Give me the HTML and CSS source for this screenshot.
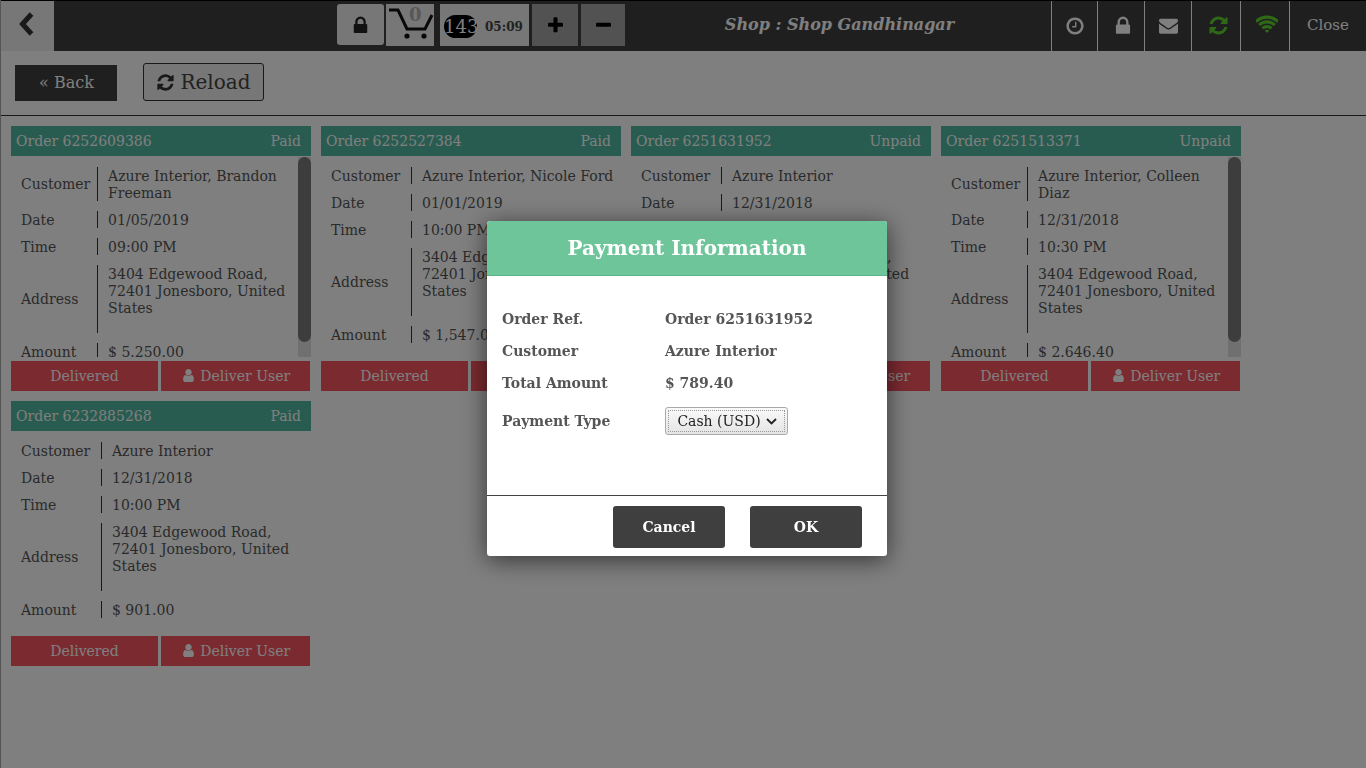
FILE: index.html
```html
<!DOCTYPE html>
<html>
<head>
  <title>Shop Gandhinagar - Orders</title>
  <link rel="stylesheet" href="styles.css">
</head>
<body>
  <div class="top-bar">
    <div class="back-arrow">
      <svg width="17" height="26" viewBox="0 0 17 26"><polyline points="13.5,3 4.5,13 13.5,23" fill="none" stroke="#333" stroke-width="5"/></svg>
    </div>
    <div class="pos-group">
      <div class="pos-btn lock-btn">
        <svg width="21" height="21" viewBox="0 0 1792 1792"><path fill="#222" d="M640 768h512v-192q0-106-75-181t-181-75-181 75-75 181v192zm832 96v576q0 40-28 68t-68 28h-960q-40 0-68-28t-28-68v-576q0-40 28-68t68-28h32v-192q0-184 132-316t316-132 316 132 132 316v192h32q40 0 68 28t28 68z"/></svg>
      </div>
      <div class="pos-btn cart-btn">
        <svg width="48" height="42" viewBox="0 0 48 42">
          <polyline points="3,6 12,6 21,25 39,25 46,11" fill="none" stroke="#111" stroke-width="3"/>
          <circle cx="21" cy="32" r="2.6" fill="#111"/>
          <circle cx="38" cy="32" r="2.6" fill="#111"/>
        </svg>
        <span class="cart-count">0</span>
      </div>
      <div class="pos-btn timer-btn">
        <span class="timer-badge">143</span>
        <span class="timer-text">05:09</span>
      </div>
      <div class="pos-btn step-btn plus-btn">
        <svg width="19" height="19" viewBox="0 0 1792 1792"><path fill="#000" d="M1600 736v192q0 40-28 68t-68 28h-416v416q0 40-28 68t-68 28h-192q-40 0-68-28t-28-68v-416h-416q-40 0-68-28t-28-68v-192q0-40 28-68t68-28h416v-416q0-40 28-68t68-28h192q40 0 68 28t28 68v416h416q40 0 68 28t28 68z"/></svg>
      </div>
      <div class="pos-btn step-btn minus-btn">
        <svg width="19" height="19" viewBox="0 0 1792 1792"><path fill="#000" d="M1600 736v192q0 40-28 68t-68 28h-1216q-40 0-68-28t-28-68v-192q0-40 28-68t68-28h1216q40 0 68 28t28 68z"/></svg>
      </div>
    </div>
    <div class="shop-title">Shop : Shop Gandhinagar</div>
    <div class="status-group">
      <div class="status-item w46">
        <svg width="20" height="20" viewBox="0 0 1792 1792"><path fill="#fff" d="M1024 544v448q0 14-9 23t-23 9h-320q-14 0-23-9t-9-23v-64q0-14 9-23t23-9h224v-352q0-14 9-23t23-9h64q14 0 23 9t9 23zm416 352q0-148-73-273t-198-198-273-73-273 73-198 198-73 273 73 273 198 198 273 73 273-73 198-198 73-273zm224 0q0 209-103 385.5t-279.5 279.5-385.5 103-385.5-103-279.5-279.5-103-385.5 103-385.5 279.5-279.5 385.5-103 385.5 103 279.5 279.5 103 385.5z"/></svg>
      </div>
      <div class="status-item w47 shift-right">
        <svg width="22" height="22" viewBox="0 0 1792 1792"><path fill="#fff" d="M640 768h512v-192q0-106-75-181t-181-75-181 75-75 181v192zm832 96v576q0 40-28 68t-68 28h-960q-40 0-68-28t-28-68v-576q0-40 28-68t68-28h32v-192q0-184 132-316t316-132 316 132 132 316v192h32q40 0 68 28t28 68z"/></svg>
      </div>
      <div class="status-item w47">
        <svg width="19" height="19" viewBox="0 0 1792 1792"><path fill="#fff" d="M1792 710v794q0 66-47 113t-113 47h-1472q-66 0-113-47t-47-113v-794q44 49 101 87 362 246 497 345 57 42 92.5 65.5t94.5 48 110 24.5h2q51 0 110-24.5t94.5-48 92.5-65.5q170-123 498-345 57-39 100-87zm0-294q0 79-49 151t-122 123q-376 261-468 325-10 7-42.5 30.5t-54 38-52 32.5-57.5 27-50 9h-2q-23 0-50-9t-57.5-27-52-32.5-54-38-42.5-30.5q-91-64-262-182.5t-205-142.5q-62-42-117-115.5t-55-136.5q0-78 41.5-130t118.5-52h1472q65 0 112.5 47t47.5 113z"/></svg>
      </div>
      <div class="status-item w49 shift-right">
        <svg width="21" height="21" viewBox="0 0 1792 1792"><path fill="#5ed32e" d="M1639 1056q0 5-1 7-64 268-268 434.5t-478 166.5q-146 0-282.5-55t-243.5-157l-129 129q-19 19-45 19t-45-19-19-45v-448q0-26 19-45t45-19h448q26 0 45 19t19 45-19 45l-137 137q71 66 161 102t187 36q134 0 250-65t186-179q11-17 53-117 8-23 30-23h192q13 0 22.5 9.5t9.5 22.5zm25-800v448q0 26-19 45t-45 19h-448q-26 0-45-19t-19-45 19-45l138-138q-148-137-349-137-134 0-250 65t-186 179q-11 17-53 117-8 23-30 23h-199q-13 0-22.5-9.5t-9.5-22.5v-7q65-268 270-434.5t480-166.5q146 0 284 55.5t245 156.5l130-129q19-19 45-19t45 19 19 45z"/></svg>
      </div>
      <div class="status-item w49 shift-right wifi-item">
        <svg width="22" height="22" viewBox="0 0 1792 1792"><path fill="#5ed32e" d="M896 1523q-20 0-93-73.5t-73-93.5q0-32 62.5-54t103.5-22 103.5 22 62.5 54q0 20-73 93.5t-93 73.5zm270-271q-2 0-40-25t-101.5-50-128.5-25-128.5 25-101 50-40.5 25q-18 0-93.5-75t-75.5-93q0-13 10-23 78-77 196-121t233-44 233 44 196 121q10 10 10 23 0 18-75.5 93t-93.5 75zm273-272q-11 0-23-8-136-105-252-154.5t-268-49.5q-85 0-170.5 22t-149 53-113.5 62-79 53-31 22q-17 0-92-75t-75-93q0-12 10-22 132-132 320-205t380-73 380 73 320 205q10 10 10 22 0 18-75 93t-92 75zm271-271q-11 0-22-9-179-157-371.5-236.5t-420.5-79.5-420.5 79.5-371.5 236.5q-11 9-22 9-17 0-92.5-75t-75.5-93q0-13 10-23 187-186 445-288t527-102 527 102 445 288q10 10 10 23 0 18-75.5 93t-92.5 75z"/></svg>
      </div>
      <div class="status-item close-item">Close</div>
    </div>
  </div>

  <div class="tool-bar">
    <div class="back-btn">&laquo; Back</div>
    <div class="reload-btn">
      <svg width="19" height="19" viewBox="0 0 1792 1792"><path fill="#333" d="M1639 1056q0 5-1 7-64 268-268 434.5t-478 166.5q-146 0-282.5-55t-243.5-157l-129 129q-19 19-45 19t-45-19-19-45v-448q0-26 19-45t45-19h448q26 0 45 19t19 45-19 45l-137 137q71 66 161 102t187 36q134 0 250-65t186-179q11-17 53-117 8-23 30-23h192q13 0 22.5 9.5t9.5 22.5zm25-800v448q0 26-19 45t-45 19h-448q-26 0-45-19t-19-45 19-45l138-138q-148-137-349-137-134 0-250 65t-186 179q-11 17-53 117-8 23-30 23h-199q-13 0-22.5-9.5t-9.5-22.5v-7q65-268 270-434.5t480-166.5q146 0 284 55.5t245 156.5l130-129q19-19 45-19t45 19 19 45z"/></svg>
      Reload
    </div>
  </div>

  <div class="order-list">
    <div class="order-card">
      <div class="order-head"><span>Order 6252609386</span><span>Paid</span></div>
      <div class="order-body">
        <div class="order-scroll">
          <table class="order-table">
            <tr><td class="lbl lbl-tall">Customer</td><td class="val">Azure Interior, Brandon Freeman</td></tr>
            <tr><td class="lbl">Date</td><td class="val">01/05/2019</td></tr>
            <tr><td class="lbl">Time</td><td class="val">09:00 PM</td></tr>
            <tr><td class="lbl lbl-tall">Address</td><td class="val">3404 Edgewood Road, 72401 Jonesboro, United States<br><br></td></tr>
            <tr><td class="lbl">Amount</td><td class="val">$ 5.250.00</td></tr>
          </table>
        </div>
        <div class="scroll-track"><div class="scroll-thumb"></div></div>
      </div>
      <div class="order-actions">
        <div class="act-btn act-left">Delivered</div>
        <div class="act-btn act-right"><svg width="15" height="15" viewBox="0 0 1792 1792"><path fill="#fff" d="M1536 1399q0 109-62.5 187t-150.5 78h-854q-88 0-150.5-78t-62.5-187q0-85 8.5-160.5t31.5-152 58.5-131 94-89 134.5-34.5q131 128 313 128t313-128q76 0 134.5 34.5t94 89 58.5 131 31.5 152 8.5 160.5zm-256-887q0 159-112.5 271.5t-271.5 112.5-271.5-112.5-112.5-271.5 112.5-271.5 271.5-112.5 271.5 112.5 112.5 271.5z"/></svg> Deliver User</div>
      </div>
    </div>

    <div class="order-card">
      <div class="order-head"><span>Order 6252527384</span><span>Paid</span></div>
      <div class="order-body">
        <div class="order-scroll">
          <table class="order-table">
            <tr><td class="lbl">Customer</td><td class="val">Azure Interior, Nicole Ford</td></tr>
            <tr><td class="lbl">Date</td><td class="val">01/01/2019</td></tr>
            <tr><td class="lbl">Time</td><td class="val">10:00 PM</td></tr>
            <tr><td class="lbl lbl-tall">Address</td><td class="val">3404 Edgewood Road, 72401 Jonesboro, United States<br><br></td></tr>
            <tr><td class="lbl">Amount</td><td class="val">$ 1,547.00</td></tr>
          </table>
        </div>
      </div>
      <div class="order-actions">
        <div class="act-btn act-left">Delivered</div>
        <div class="act-btn act-right"><svg width="15" height="15" viewBox="0 0 1792 1792"><path fill="#fff" d="M1536 1399q0 109-62.5 187t-150.5 78h-854q-88 0-150.5-78t-62.5-187q0-85 8.5-160.5t31.5-152 58.5-131 94-89 134.5-34.5q131 128 313 128t313-128q76 0 134.5 34.5t94 89 58.5 131 31.5 152 8.5 160.5zm-256-887q0 159-112.5 271.5t-271.5 112.5-271.5-112.5-112.5-271.5 112.5-271.5 271.5-112.5 271.5 112.5 112.5 271.5z"/></svg> Deliver User</div>
      </div>
    </div>

    <div class="order-card">
      <div class="order-head"><span>Order 6251631952</span><span>Unpaid</span></div>
      <div class="order-body">
        <div class="order-scroll">
          <table class="order-table">
            <tr><td class="lbl">Customer</td><td class="val">Azure Interior</td></tr>
            <tr><td class="lbl">Date</td><td class="val">12/31/2018</td></tr>
            <tr><td class="lbl">Time</td><td class="val">10:00 PM</td></tr>
            <tr><td class="lbl lbl-tall">Address</td><td class="val">3404 Edgewood Road, 72401 Jonesboro, United States<br><br></td></tr>
            <tr><td class="lbl">Amount</td><td class="val">$ 789.40</td></tr>
          </table>
        </div>
      </div>
      <div class="order-actions">
        <div class="act-btn act-left">Delivered</div>
        <div class="act-btn act-right"><svg width="15" height="15" viewBox="0 0 1792 1792"><path fill="#fff" d="M1536 1399q0 109-62.5 187t-150.5 78h-854q-88 0-150.5-78t-62.5-187q0-85 8.5-160.5t31.5-152 58.5-131 94-89 134.5-34.5q131 128 313 128t313-128q76 0 134.5 34.5t94 89 58.5 131 31.5 152 8.5 160.5zm-256-887q0 159-112.5 271.5t-271.5 112.5-271.5-112.5-112.5-271.5 112.5-271.5 271.5-112.5 271.5 112.5 112.5 271.5z"/></svg> Deliver User</div>
      </div>
    </div>

    <div class="order-card">
      <div class="order-head"><span>Order 6251513371</span><span>Unpaid</span></div>
      <div class="order-body">
        <div class="order-scroll">
          <table class="order-table">
            <tr><td class="lbl lbl-tall">Customer</td><td class="val">Azure Interior, Colleen Diaz</td></tr>
            <tr><td class="lbl">Date</td><td class="val">12/31/2018</td></tr>
            <tr><td class="lbl">Time</td><td class="val">10:30 PM</td></tr>
            <tr><td class="lbl lbl-tall">Address</td><td class="val">3404 Edgewood Road, 72401 Jonesboro, United States<br><br></td></tr>
            <tr><td class="lbl">Amount</td><td class="val">$ 2.646.40</td></tr>
          </table>
        </div>
        <div class="scroll-track"><div class="scroll-thumb"></div></div>
      </div>
      <div class="order-actions">
        <div class="act-btn act-left">Delivered</div>
        <div class="act-btn act-right"><svg width="15" height="15" viewBox="0 0 1792 1792"><path fill="#fff" d="M1536 1399q0 109-62.5 187t-150.5 78h-854q-88 0-150.5-78t-62.5-187q0-85 8.5-160.5t31.5-152 58.5-131 94-89 134.5-34.5q131 128 313 128t313-128q76 0 134.5 34.5t94 89 58.5 131 31.5 152 8.5 160.5zm-256-887q0 159-112.5 271.5t-271.5 112.5-271.5-112.5-112.5-271.5 112.5-271.5 271.5-112.5 271.5 112.5 112.5 271.5z"/></svg> Deliver User</div>
      </div>
    </div>

    <div class="order-card">
      <div class="order-head"><span>Order 6232885268</span><span>Paid</span></div>
      <div class="order-body">
        <div class="order-scroll">
          <table class="order-table">
            <tr><td class="lbl">Customer</td><td class="val">Azure Interior</td></tr>
            <tr><td class="lbl">Date</td><td class="val">12/31/2018</td></tr>
            <tr><td class="lbl">Time</td><td class="val">10:00 PM</td></tr>
            <tr><td class="lbl lbl-tall">Address</td><td class="val">3404 Edgewood Road, 72401 Jonesboro, United States<br><br></td></tr>
            <tr><td class="lbl">Amount</td><td class="val">$ 901.00</td></tr>
          </table>
        </div>
      </div>
      <div class="order-actions">
        <div class="act-btn act-left">Delivered</div>
        <div class="act-btn act-right"><svg width="15" height="15" viewBox="0 0 1792 1792"><path fill="#fff" d="M1536 1399q0 109-62.5 187t-150.5 78h-854q-88 0-150.5-78t-62.5-187q0-85 8.5-160.5t31.5-152 58.5-131 94-89 134.5-34.5q131 128 313 128t313-128q76 0 134.5 34.5t94 89 58.5 131 31.5 152 8.5 160.5zm-256-887q0 159-112.5 271.5t-271.5 112.5-271.5-112.5-112.5-271.5 112.5-271.5 271.5-112.5 271.5 112.5 112.5 271.5z"/></svg> Deliver User</div>
      </div>
    </div>
  </div>

  <div class="overlay"></div>

  <div class="pay-dialog">
    <div class="pay-head">Payment Information</div>
    <div class="pay-body">
      <div class="pay-grid">
        <div>Order Ref.</div><div>Order 6251631952</div>
        <div>Customer</div><div>Azure Interior</div>
        <div>Total Amount</div><div>$ 789.40</div>
        <div>Payment Type</div>
        <div class="pay-select">
          <span class="pay-select-inner">Cash (USD)
            <svg width="11" height="7" viewBox="0 0 11 7"><polyline points="1,1 5.5,5.5 10,1" fill="none" stroke="#222" stroke-width="1.8"/></svg>
          </span>
        </div>
      </div>
    </div>
    <div class="pay-foot">
      <div class="pay-btn">Cancel</div>
      <div class="pay-btn">OK</div>
    </div>
  </div>
</body>
</html>
```

FILE: styles.css
```css
html, body {
  margin: 0;
  padding: 0;
  height: 100%;
}

body {
  font-family: "DejaVu Serif", serif;
  font-size: 14px;
  color: #555;
  background-color: #fff;
  border-left: 1px solid #aaa;
  box-sizing: border-box;
  overflow: hidden;
}

/* top bar */
.top-bar {
  display: flex;
  height: 50px;
  margin-left: -1px;
  border-top: 1px solid #000;
  background-color: #3e3e3e;
}

.back-arrow {
  width: 53px;
  margin-left: 1px;
  background-color: #eee;
  display: flex;
  justify-content: center;
  align-items: flex-start;
  padding: 10px 0 0 0;
  box-sizing: border-box;
}

.back-arrow svg {
  margin-left: 1px;
  margin-right: 3px;
}

.pos-group {
  display: flex;
  margin-left: 283px;
  padding-top: 3px;
}

.pos-btn {
  height: 42px;
  box-sizing: border-box;
  display: flex;
  align-items: center;
  justify-content: center;
  background-color: #eee;
}

.lock-btn {
  width: 47px;
  height: 41px;
  padding: 2px 1px 0 0;
  border-radius: 3px;
  margin-right: 2px;
}

.cart-btn {
  width: 48px;
  height: 42px;
  margin-right: 6px;
  position: relative;
}

.cart-count {
  position: absolute;
  left: 23px;
  top: 0;
  font-size: 18px;
  font-weight: bold;
  color: #b0b0b0;
}

.timer-btn {
  width: 89px;
  margin-right: 3px;
  padding-top: 3px;
  justify-content: flex-start;
}

.timer-badge {
  width: 33px;
  height: 23px;
  margin-left: 4px;
  border-radius: 12px;
  background-color: #000;
  color: #fff;
  font-size: 18px;
  line-height: 23px;
  text-align: center;
}

.timer-text {
  margin-left: 8px;
  font-size: 12px;
  font-weight: bold;
  color: #444;
}

.step-btn {
  width: 46px;
  padding-top: 1px;
  background-color: #a5a5a5;
  margin-right: 3px;
}

.minus-btn {
  width: 44px;
  margin-right: 0;
}

.shop-title {
  flex: 1;
  padding-top: 14px;
  padding-left: 3px;
  text-align: center;
  font-size: 16px;
  font-weight: bold;
  font-style: italic;
  color: #fff;
}

.status-group {
  display: flex;
}

.status-item {
  display: flex;
  align-items: center;
  justify-content: center;
  border-left: 1px solid #fff;
  box-sizing: border-box;
  padding-bottom: 1px;
}

.w46 {
  width: 46px;
}

.w47 {
  width: 47px;
}

.w49 {
  width: 49px;
}

.shift-right {
  padding-left: 4px;
}

.wifi-item {
  padding-bottom: 3px;
}

.close-item {
  width: 77px;
  font-size: 15px;
  color: #fff;
  padding-bottom: 3px;
}

/* back and reload */
.tool-bar {
  height: 64px;
  display: flex;
  align-items: flex-start;
  border-bottom: 1px solid #333;
  padding-left: 14px;
}

.back-btn {
  width: 102px;
  height: 36px;
  margin-top: 14px;
  padding-left: 24px;
  box-sizing: border-box;
  background-color: #3e3e3e;
  color: #fff;
  font-size: 16px;
  line-height: 36px;
}

.reload-btn {
  width: 121px;
  height: 38px;
  margin-top: 12px;
  margin-left: 26px;
  box-sizing: border-box;
  border: 1px solid #333;
  border-radius: 3px;
  background-color: #eee;
  color: #444;
  font-size: 20px;
  display: flex;
  align-items: center;
  justify-content: center;
  gap: 5px;
}

/* orders */
.order-list {
  display: flex;
  flex-wrap: wrap;
  gap: 10px;
  padding: 10px 0 0 10px;
  width: 1240px;
}

.order-card {
  width: 300px;
}

.order-head {
  height: 30px;
  padding: 0 10px 0 5px;
  display: flex;
  justify-content: space-between;
  align-items: center;
  background-color: #52b8a0;
  color: #fff;
}

.order-body {
  height: 200px;
  margin-top: 1px;
  display: flex;
}

.order-scroll {
  flex: 1;
  min-width: 0;
  overflow: hidden;
}

.scroll-track {
  width: 13px;
  background-color: #e0e0e0;
}

.scroll-thumb {
  height: 185px;
  border-radius: 7px;
  background-color: #7a7a7a;
}

.order-table {
  width: 100%;
  margin-top: 1px;
  table-layout: fixed;
  border-collapse: separate;
  border-spacing: 0 9px;
  line-height: 17px;
}

.order-table td {
  padding: 1px 0 0 0;
}

.order-table .lbl {
  width: 30%;
  padding-left: 10px;
  box-sizing: border-box;
}

.order-table .lbl-tall {
  padding-top: 0;
  padding-bottom: 1px;
}

.order-table .val {
  padding-left: 11px;
  background: linear-gradient(#333, #333) left top / 1px calc(100% - 1px) no-repeat;
}

.order-actions {
  display: flex;
  gap: 3px;
  margin-top: 4px;
}

.act-btn {
  height: 30px;
  line-height: 30px;
  text-align: center;
  background-color: #f65660;
  color: #fff;
}

.act-left {
  width: 147px;
}

.act-right {
  width: 149px;
}

.act-right svg {
  vertical-align: -2px;
}

/* dialog */
.overlay {
  position: fixed;
  top: 0;
  left: 0;
  right: 0;
  bottom: 0;
  background-color: rgba(0, 0, 0, 0.5);
}

.pay-dialog {
  position: fixed;
  left: 487px;
  top: 221px;
  width: 400px;
  height: 335px;
  background-color: #fff;
  border-radius: 3px;
  box-shadow: 0 4px 24px rgba(0, 0, 0, 0.6);
  overflow: hidden;
  display: flex;
  flex-direction: column;
}

.pay-head {
  height: 55px;
  box-sizing: border-box;
  border-bottom: 1px solid #5fb38a;
  background-color: #6ec59a;
  color: #fff;
  font-size: 20px;
  font-weight: bold;
  line-height: 54px;
  text-align: center;
}

.pay-body {
  height: 220px;
  box-sizing: border-box;
  padding: 35px 15px 0 15px;
  border-bottom: 1px solid #444;
}

.pay-grid {
  display: grid;
  grid-template-columns: 163px 1fr;
  row-gap: 15px;
  align-items: center;
  font-weight: bold;
  line-height: 17px;
  color: #555;
}

.pay-select {
  width: 123px;
  height: 28px;
  box-sizing: border-box;
  padding: 2px;
  border: 1px solid #aaa;
  border-radius: 3px;
  background: linear-gradient(#fafafa, #e4e4e4);
  font-weight: normal;
  color: #222;
}

.pay-select-inner {
  height: 100%;
  box-sizing: border-box;
  display: flex;
  align-items: center;
  justify-content: center;
  gap: 5px;
  padding-left: 1px;
  border: 1px dotted #999;
}

.pay-foot {
  display: flex;
  justify-content: flex-end;
  gap: 25px;
  padding: 10px 25px 0 0;
}

.pay-btn {
  width: 112px;
  height: 42px;
  border-radius: 3px;
  background-color: #3f3f3f;
  color: #fff;
  font-weight: bold;
  line-height: 42px;
  text-align: center;
}
```
